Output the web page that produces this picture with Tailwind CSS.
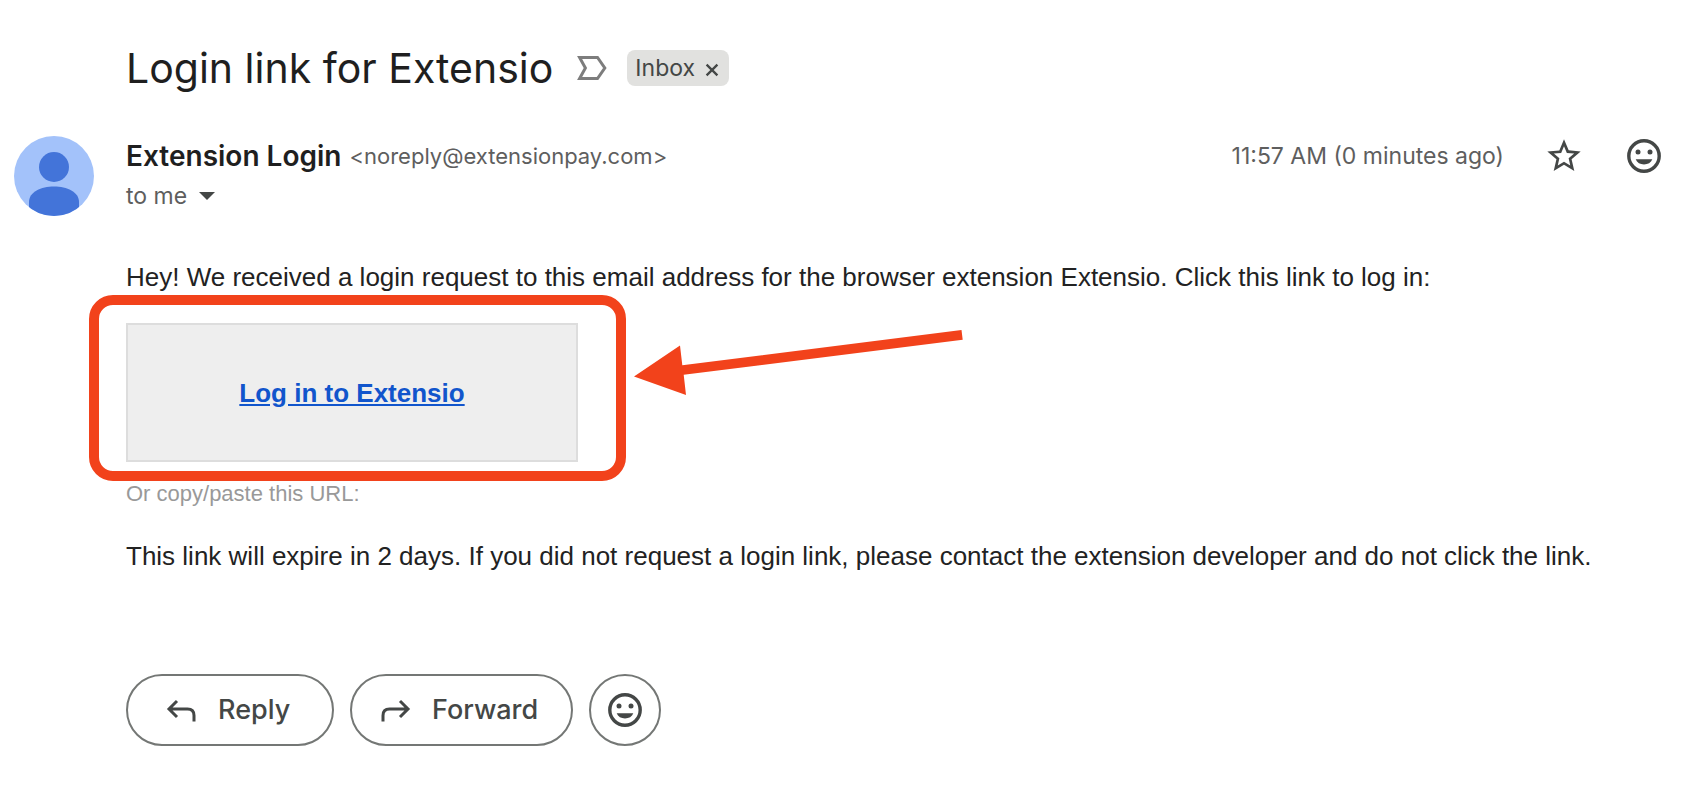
<!DOCTYPE html>
<html lang="en">
<head>
<meta charset="utf-8">
<meta name="viewport" content="width=device-width, initial-scale=1">
<title>Login link for Extensio</title>
<script src="https://cdn.jsdelivr.net/npm/@tailwindcss/browser@4"></script>
</head>
<body class="bg-white font-['Inter',sans-serif] text-[#1f1f1f]">
<svg class="hidden" aria-hidden="true">
  <symbol id="smile" viewBox="0 0 40 40">
    <circle cx="20" cy="20" r="15.2" fill="none" stroke="#444746" stroke-width="3.4"/>
    <circle cx="14" cy="16" r="2.5" fill="#444746"/>
    <circle cx="26" cy="16" r="2.5" fill="#444746"/>
    <path d="M11.7 23.3h16.6c-1.300 3.400-4.400 5.200-8.300 5.200s-7-1.800-8.300-5.200z" fill="#444746"/>
  </symbol>
</svg>
<main class="flex flex-col pt-11 pb-12">
  <header class="flex items-center pl-[126px] h-12">
    <h1 class="text-[41px] leading-12 whitespace-nowrap">Login link for Extensio</h1>
    <button type="button" aria-label="Mark important" class="ml-5.5 shrink-0">
      <svg class="block w-[34px] h-6" viewBox="0 0 34 24"><path d="M4.600 1.500h17.900l7.300 10.500-7.300 10.500H4.600L10.400 12z" fill="none" stroke="#7d7d7d" stroke-width="3"/></svg>
    </button>
    <div class="ml-4.5 flex h-9 items-center gap-2.5 rounded-lg bg-[#e1e1df] pl-2 pr-2.5 text-[#444746]">
      <span class="text-[23px] leading-9">Inbox</span>
      <button type="button" aria-label="Remove label Inbox">
        <svg class="block size-3.5 mt-1" viewBox="0 0 14 14"><path d="M1.600 1.600l10.800 10.800M12.400 1.600L1.600 12.400" stroke="#444746" stroke-width="2.300"/></svg>
      </button>
    </div>
  </header>

  <section class="mt-11 flex items-start pl-3.5 pr-10">
    <svg class="size-20 shrink-0" viewBox="0 0 80 80" role="img" aria-label="Sender">
      <clipPath id="disc"><circle cx="40" cy="40" r="40"/></clipPath>
      <g clip-path="url(#disc)">
        <path d="M0 0h80v80H0z" fill="#a3c2fa"/>
        <circle cx="40" cy="31" r="15" fill="#4374d9"/>
        <path d="M15 80V66c0-10 12-15.500 25-15.500S65 56 65 66v14z" fill="#4374d9"/>
      </g>
    </svg>
    <div class="ml-8 grow">
      <div class="flex h-10 items-center whitespace-nowrap">
        <strong class="text-[28px] leading-9 font-semibold">Extension Login</strong>
        <span class="ml-2 text-[22px] text-[#5e5e5e]">&lt;noreply@extensionpay.com&gt;</span>
      </div>
      <button type="button" class="flex h-10 items-center gap-3 text-[23px] text-[#5e5e5e]">to me
        <svg class="w-4 h-2" viewBox="0 0 16 8"><path d="M0 0h16L8 8z" fill="#444746"/></svg>
      </button>
    </div>
    <div class="flex h-10 items-center whitespace-nowrap">
      <time class="text-[23px] text-[#5e5e5e]">11:57 AM (0 minutes ago)</time>
      <button type="button" aria-label="Star" class="ml-10">
        <svg class="block size-10" viewBox="0 0 24 24"><path fill="#444746" d="M22 9.240l-7.190-.620L12 2 9.190 8.630 2 9.240l5.460 4.730L5.820 21 12 17.270 18.180 21l-1.630-7.030L22 9.240zM12 15.400l-3.760 2.270 1-4.280-3.320-2.880 4.380-.380L12 6.100l1.710 4.040 4.380.380-3.320 2.880 1 4.280L12 15.400z"/></svg>
      </button>
      <button type="button" aria-label="Add reaction" class="ml-10"><svg class="block size-10"><use href="#smile"/></svg></button>
    </div>
  </section>

  <article class="mt-[43px] pl-[126px] pr-8 font-['Liberation_Sans',Arial,sans-serif] text-[#222222]">
    <p class="text-[26px] leading-9">Hey! We received a login request to this email address for the browser extension Extensio. Click this link to log in:</p>
    <div class="relative mt-7 flex h-[139px] w-[452px] items-center justify-center border-2 border-[#dddddd] bg-[#eeeeee]">
      <a href="#login" class="text-[26px] leading-9 font-bold text-[#1155cc] underline">Log in to Extensio</a>
      <div class="pointer-events-none absolute -top-[30px] -bottom-[21px] -left-[39px] -right-[50px] rounded-3xl border-10 border-[#f2421b]"></div>
      <svg class="pointer-events-none absolute left-[505px] top-0 h-20 w-[332px]" viewBox="0 0 332 80" aria-hidden="true"><path fill="#f2421b" d="M1 51.500L47 20.500l2.300 19.700L328.500 5l1.200 9.800L50.700 49.800l2.300 20.200z"/></svg>
    </div>
    <p class="mt-4 text-[22px] leading-8 text-[#999999]">Or copy/paste this URL:</p>
    <p class="mt-7 text-[26px] leading-9">This link will expire in 2 days. If you did not request a login link, please contact the extension developer and do not click the link.</p>
  </article>

  <footer class="mt-25 flex gap-4 pl-[126px] text-[27px] font-medium text-[#444746]">
    <button type="button" class="flex h-18 w-52 items-center rounded-full border-2 border-[#747775] pl-9">
      <svg class="w-[34px] h-8 mr-5" viewBox="0 0 34 32"><path d="M13 7L5 15l8 8M5 15h18.500q6.500 0 6.500 6.500v6" fill="none" stroke="#444746" stroke-width="3"/></svg>Reply
    </button>
    <button type="button" class="flex h-18 w-[223px] items-center rounded-full border-2 border-[#747775] pl-7">
      <svg class="w-[34px] h-8 mr-4.5" viewBox="0 0 34 32"><path d="M20 7l8 8-8 8M28 15H9.500Q3 15 3 21.500v6" fill="none" stroke="#444746" stroke-width="3"/></svg>Forward
    </button>
    <button type="button" aria-label="Add reaction" class="flex size-18 items-center justify-center rounded-full border-2 border-[#747775]"><svg class="size-10"><use href="#smile"/></svg></button>
  </footer>
</main>
</body>
</html>
